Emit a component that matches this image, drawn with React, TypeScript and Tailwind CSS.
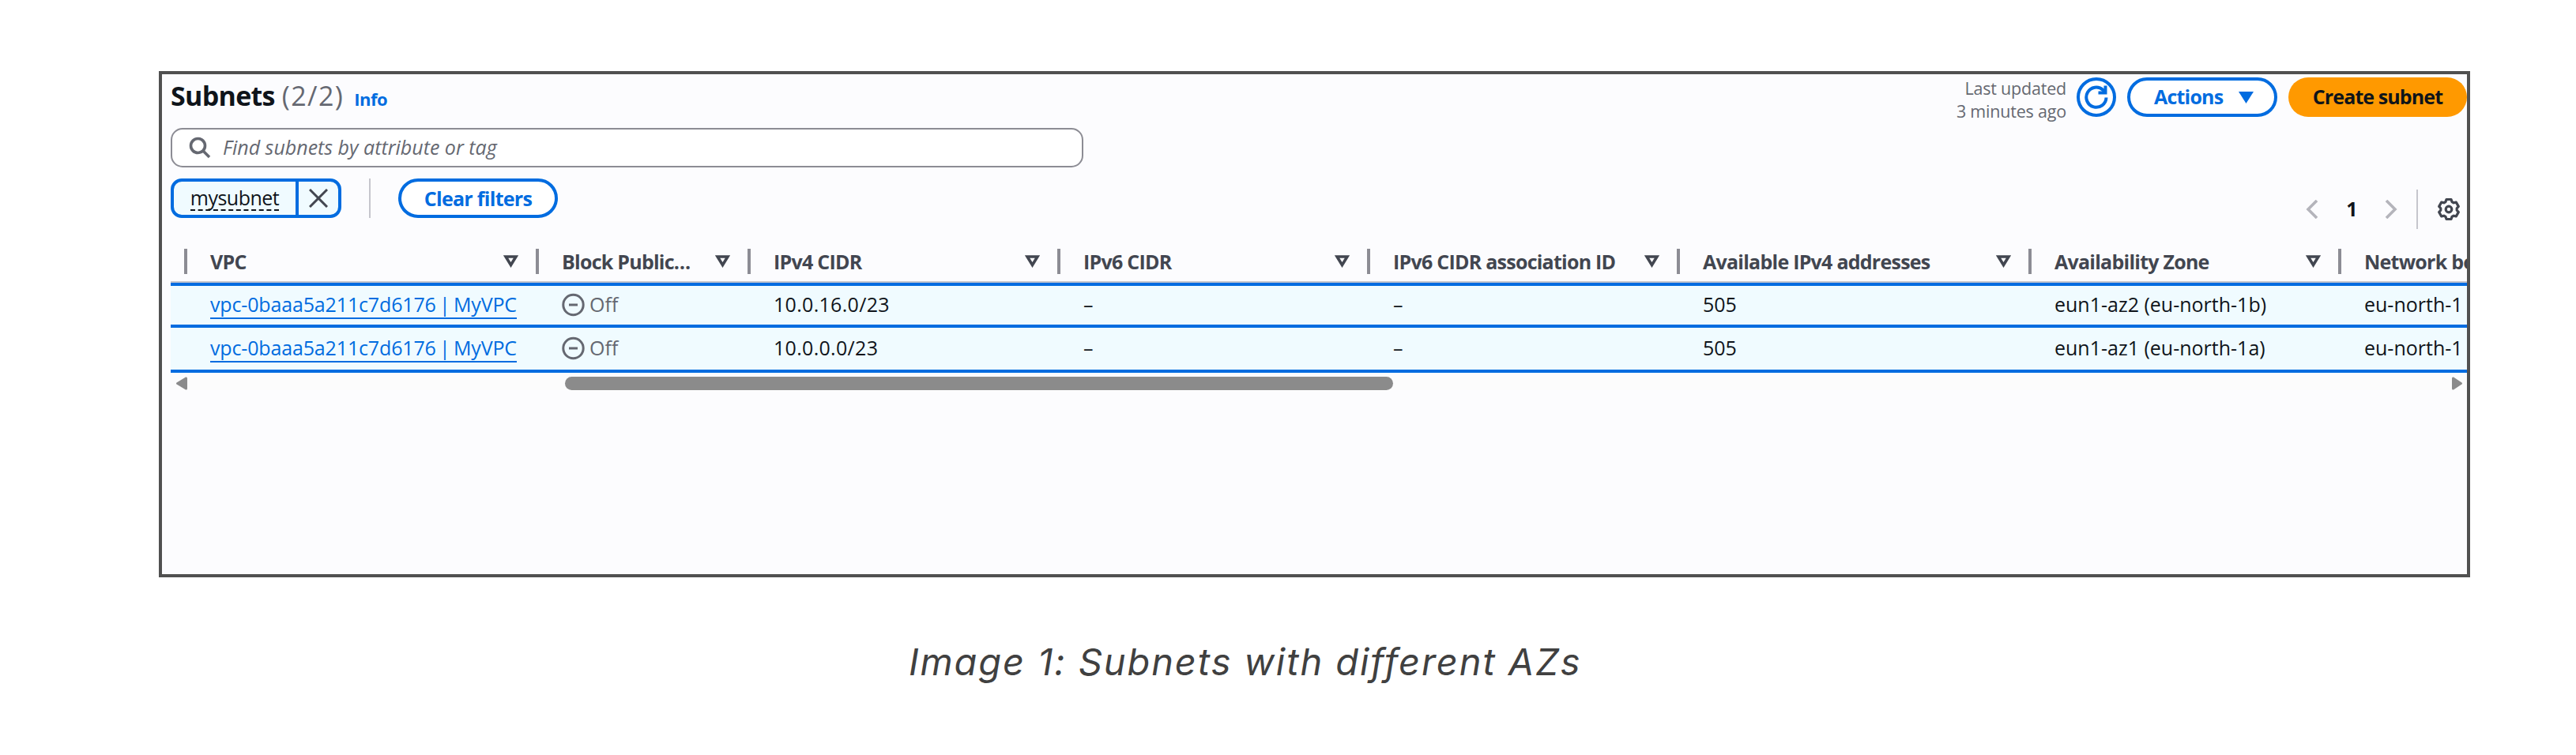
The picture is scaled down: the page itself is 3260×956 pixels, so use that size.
import { ReactNode } from "react";

const columns = [
  { label: "VPC", width: "w-[445px]" },
  { label: "Block Public…", width: "w-[268px]" },
  { label: "IPv4 CIDR", width: "w-[392px]" },
  { label: "IPv6 CIDR", width: "w-[392px]" },
  { label: "IPv6 CIDR association ID", width: "w-[392px]" },
  { label: "Available IPv4 addresses", width: "w-[445px]" },
  { label: "Availability Zone", width: "w-[392px]" },
  { label: "Network bo", width: "w-[392px]" },
];

const rows = [
  { cidr: "10.0.16.0/23", zone: "eun1-az2 (eu-north-1b)" },
  { cidr: "10.0.0.0/23", zone: "eun1-az1 (eu-north-1a)" },
];

function Off() {
  return (
    <span className="flex items-center gap-[6px] text-[#656871]">
      <svg width="29" height="30" viewBox="0 0 29 30" fill="none" stroke="#656871" strokeWidth="3">
        <circle cx="14.5" cy="15" r="12.7" />
        <path d="M9 15h11" />
      </svg>
      <span>Off</span>
    </span>
  );
}

function Row({ cidr, zone, height }: { cidr: string; zone: string; height: string }) {
  const cells: ReactNode[] = [
    <span className="border-b-2 border-[#006ce0] leading-[34px] tracking-[-0.15px] text-[#006ce0] [word-spacing:-2px]">
      vpc-0baaa5a211c7d6176 | MyVPC
    </span>,
    <Off />,
    <span className="tracking-[0.3px]">{cidr}</span>,
    "–",
    "–",
    "505",
    zone,
    "eu-north-1",
  ];
  return (
    <div className={`flex items-center border-b-4 border-[#006ce0] bg-[#f0fbff] pb-px pl-[17px] text-[25px] whitespace-nowrap text-[#0f141a] ${height}`}>
      {cells.map((cell, i) => (
        <div key={i} className={`shrink-0 pl-[33px] ${columns[i].width}`}>
          {cell}
        </div>
      ))}
    </div>
  );
}

export default function App() {
  return (
    <div className="h-[956px] w-[3260px] overflow-hidden bg-white pt-[90px] font-['Open_Sans','Noto_Sans',sans-serif]">
      <main className="ml-[201px] flex h-[641px] w-[2925px] flex-col overflow-hidden border-4 border-[#505050] bg-[#fcfcfe] pl-[11px]">
        <div className="flex h-[132px] shrink-0 justify-between">
          <div>
            <div className="flex h-[56px] items-baseline pt-[3px] leading-[48px]">
              <h1 className="text-[34px] font-bold tracking-[-0.7px] text-[#0f141a]">Subnets</h1>
              <span className="ml-[9px] text-[34px] tracking-[1.4px] text-[#656871]">(2/2)</span>
              <a className="ml-[13px] text-[22px] font-bold tracking-[-0.5px] text-[#006ce0]">Info</a>
            </div>
            <div className="mt-[12px] flex h-[50px] w-[1155px] items-center rounded-[15px] border-2 border-[#8c8c94] bg-white pl-[21px]">
              <svg width="28" height="28" viewBox="0 0 28 28" fill="none" stroke="#656871" strokeWidth="3.6">
                <circle cx="11.5" cy="11.5" r="9" />
                <path d="M18 18l8 8" />
              </svg>
              <span className="ml-[15px] text-[25px] text-[#656871] italic">Find subnets by attribute or tag</span>
            </div>
          </div>
          <div className="flex h-[50px] pt-[4px]">
            <div className="-mt-px mr-[13px] text-right text-[21.5px] leading-[29px] tracking-[-0.2px] text-[#656871]">
              Last updated
              <br />3 minutes ago
            </div>
            <button className="flex size-[50px] shrink-0 items-center justify-center rounded-full border-4 border-[#006ce0] bg-white">
              <svg width="32" height="32" viewBox="0 0 32 32" fill="none" stroke="#006ce0" strokeWidth="4">
                <path d="M28.500 16.500A12.600 12.600 0 1 1 24.500 7L27 9.500" />
                <path d="M27.500 1.500v9H18.500" />
              </svg>
            </button>
            <button className="ml-[14px] flex h-[50px] w-[190px] shrink-0 items-center rounded-full border-4 border-[#006ce0] bg-white pl-[30px] text-[25px] font-bold tracking-[-0.8px] text-[#006ce0]">
              <span className="w-[107px] text-left">Actions</span>
              <svg width="19" height="15" viewBox="0 0 19 15">
                <path d="M0 0h19L9.500 15z" fill="#006ce0" />
              </svg>
            </button>
            <button className="ml-[14px] h-[50px] w-[226px] shrink-0 rounded-full bg-[#ff9900] text-[25px] font-bold tracking-[-0.9px] whitespace-nowrap text-[#0f141a]">
              Create subnet
            </button>
          </div>
        </div>
        <div className="flex h-[89px] shrink-0 justify-between">
          <div className="flex h-[50px] items-center">
            <div className="flex h-[50px] w-[216px] overflow-hidden rounded-[14px] border-4 border-[#006ce0] bg-[#f0fbff] text-[25px] text-[#0f141a]">
              <div className="flex flex-1 items-center justify-center">
                <span className="border-b-2 border-dashed border-[#0f141a] leading-[30px] tracking-[-0.5px]">mysubnet</span>
              </div>
              <div className="flex w-[54px] items-center justify-center border-l-4 border-[#006ce0]">
                <svg width="24" height="24" viewBox="0 0 24 24" stroke="#424650" strokeWidth="3">
                  <path d="M1 1l22 22M23 1L1 23" />
                </svg>
              </div>
            </div>
            <div className="ml-[35px] h-[50px] w-[2px] bg-[#c6c6cd]" />
            <button className="ml-[35px] h-[50px] w-[202px] rounded-full border-4 border-[#006ce0] bg-white text-[25px] leading-[40px] font-bold tracking-[-0.7px] text-[#006ce0]">
              Clear filters
            </button>
          </div>
          <div className="mt-[14px] flex h-[50px] items-center pr-[8px]">
            <svg width="16" height="24" viewBox="0 0 16 24" fill="none" stroke="#b4b4bb" strokeWidth="3.6">
              <path d="M14 1L3 12l11 11" />
            </svg>
            <span className="w-[84px] pl-px text-center text-[25px] font-bold text-[#0f141a]">1</span>
            <svg width="16" height="24" viewBox="0 0 16 24" fill="none" stroke="#b4b4bb" strokeWidth="3.6">
              <path d="M2 1l11 11L2 23" />
            </svg>
            <div className="ml-[24px] h-[50px] w-[2px] bg-[#c6c6cd]" />
            <svg className="ml-[24px]" width="30" height="30" viewBox="-15 -15 30 30" fill="none" stroke="#424650" strokeWidth="3.2" strokeLinejoin="round">
              <path d="M-3-12.500H3L4-9.500 6.200-8.200 9.300-8.850 12.300-3.650 10.200-1.300V1.300L12.300 3.650 9.300 8.850 6.200 8.200 4 9.500 3 12.500H-3L-4 9.500-6.200 8.200-9.300 8.850-12.300 3.650-10.200 1.300V-1.300L-12.300-3.650-9.300-8.850-6.200-8.200-4-9.500z" />
              <circle r="3.800" />
            </svg>
          </div>
        </div>
        <div className="flex h-[32px] shrink-0 pl-[17px] text-[25px] leading-[32px] font-bold tracking-[-0.75px] whitespace-nowrap text-[#424650]">
          {columns.map((c) => (
            <div key={c.label} className={`flex shrink-0 items-center border-l-4 border-[#8c8c94] pl-[29px] ${c.width}`}>
              <span className="flex-1">{c.label}</span>
              <svg className="mr-[22px]" width="19" height="16" viewBox="0 0 19 16" fill="none" stroke="#424650" strokeWidth="3.600">
                <path d="M3 2h13L9.500 12.500z" />
              </svg>
            </div>
          ))}
        </div>
        <div className="mt-[9px] h-[6px] shrink-0 border-t-2 border-[#c6c6cd] bg-[#006ce0]" />
        <Row {...rows[0]} height="h-[53px] shrink-0" />
        <Row {...rows[1]} height="h-[57px] shrink-0" />
        <div className="mt-[5px] flex h-[17px] shrink-0 items-center bg-[#fcfcfc] pl-[7px]">
          <svg width="14" height="17" viewBox="0 0 14 17" fill="#8b8b8b">
            <path d="M12 0.500Q14 0 14 2v13q0 2-2 1.500L0.500 9.500q-1-1 0-2z" />
          </svg>
          <div className="ml-[478px] h-[17px] w-[1048px] rounded-full bg-[#8b8b8b]" />
          <svg className="mr-[6px] ml-auto" width="13" height="17" viewBox="0 0 13 17" fill="#8b8b8b">
            <path d="M2 0.500Q0 0 0 2v13q0 2 2 1.500L12.500 9.500q1-1 0-2z" />
          </svg>
        </div>
      </main>
      <p className="mt-[75px] ml-[1150px] font-['Inter',sans-serif] text-[47px] leading-[64px] tracking-[1.9px] whitespace-nowrap text-[#404040] italic">
        Image 1: Subnets with different AZs
      </p>
    </div>
  );
}
